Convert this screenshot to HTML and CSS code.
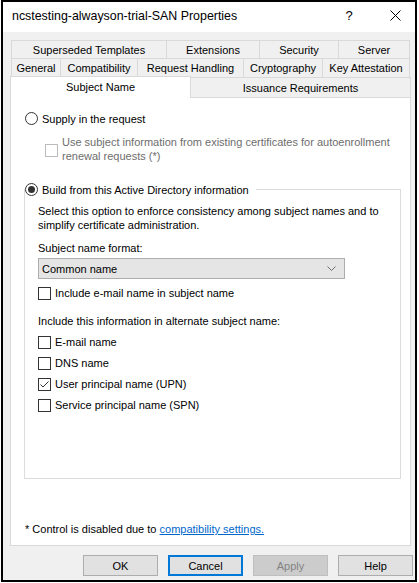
FILE: index.html
```html
<!DOCTYPE html>
<html>
<head>
<meta charset="utf-8">
<link rel="stylesheet" href="styles.css">
</head>
<body>
<div class="window">
  <div class="titlebar">
    <span class="title">ncstesting-alwayson-trial-SAN Properties</span>
    <span class="help">?</span>
    <span class="close"><svg width="11" height="11" viewBox="0 0 11 11"><path d="M0.5 0.5 L10.5 10.5 M10.5 0.5 L0.5 10.5" stroke="#000" stroke-width="1" fill="none"/></svg></span>
  </div>
  <div class="body">
    <div class="tabs">
      <div class="tabrow row1">
        <div class="tab w-sup">Superseded Templates</div>
        <div class="tab w-ext">Extensions</div>
        <div class="tab w-sec">Security</div>
        <div class="tab w-srv">Server</div>
      </div>
      <div class="tabrow row2">
        <div class="tab w-gen">General</div>
        <div class="tab w-com">Compatibility</div>
        <div class="tab w-req">Request Handling</div>
        <div class="tab w-cry">Cryptography</div>
        <div class="tab w-key">Key Attestation</div>
      </div>
      <div class="tabrow row3">
        <div class="tab selected w-sub">Subject Name</div>
        <div class="tab w-iss">Issuance Requirements</div>
      </div>
    </div>
    <div class="panel">
      <div class="radio-row">
        <span class="radio"></span>
        <span class="label">Supply in the request</span>
      </div>
      <div class="check-row disabled multi">
        <span class="checkbox"></span>
        <span class="label">Use subject information from existing certificates for autoenrollment<br>renewal requests (*)</span>
      </div>
      <fieldset class="group">
        <legend class="group-legend">
          <span class="radio-row legend-row">
            <span class="radio checked"></span>
            <span class="label">Build from this Active Directory information</span>
          </span>
        </legend>
        <div class="group-body">
          <p class="desc">Select this option to enforce consistency among subject names and to<br>simplify certificate administration.</p>
          <p class="field-label">Subject name format:</p>
          <div class="select">
            <span class="select-text">Common name</span>
            <svg class="chev" width="9" height="5" viewBox="0 0 9 5"><path d="M0.5 0.5 L4.5 4.5 L8.5 0.5" stroke="#707070" stroke-width="1" fill="none"/></svg>
          </div>
          <div class="check-row first">
            <span class="checkbox"></span>
            <span class="label">Include e-mail name in subject name</span>
          </div>
          <p class="field-label alt">Include this information in alternate subject name:</p>
          <div class="check-row alt-first">
            <span class="checkbox"></span>
            <span class="label">E-mail name</span>
          </div>
          <div class="check-row">
            <span class="checkbox"></span>
            <span class="label">DNS name</span>
          </div>
          <div class="check-row">
            <span class="checkbox"><svg width="11" height="11" viewBox="0 0 11 11"><path d="M1.5 5.5 L4 8 L9.5 2.5" stroke="#333" stroke-width="1" fill="none"/></svg></span>
            <span class="label">User principal name (UPN)</span>
          </div>
          <div class="check-row">
            <span class="checkbox"></span>
            <span class="label">Service principal name (SPN)</span>
          </div>
        </div>
      </fieldset>
      <p class="footnote">* Control is disabled due to <a class="link" href="#">compatibility settings.</a></p>
    </div>
    <div class="buttons">
      <span class="btn">OK</span>
      <span class="btn default">Cancel</span>
      <span class="btn disabled">Apply</span>
      <span class="btn">Help</span>
    </div>
  </div>
</div>
</body>
</html>
```

FILE: styles.css
```css
* { box-sizing: border-box; }
html, body { margin: 0; padding: 0; background: #fff; }
body {
  font-family: "Liberation Sans", Arial, sans-serif;
  font-size: 11px;
  color: #000;
}
p { margin: 0; }

.window {
  width: 416px;
  height: 582px;
  margin-left: 1px;
  border: 2px solid #000;
  background: #f0f0f0;
  display: flex;
  flex-direction: column;
}

.titlebar {
  height: 30px;
  background: #fff;
  display: flex;
  align-items: center;
  padding-bottom: 3px;
  flex: none;
}
.title {
  font-size: 12.4px;
  padding-left: 9px;
}
.help {
  margin-left: auto;
  width: 22px;
  text-align: center;
  font-size: 13px;
}
.close {
  width: 22px;
  margin-left: 24px;
  margin-right: 9px;
  display: flex;
  justify-content: center;
  align-items: center;
}

.body {
  flex: 1;
  padding-top: 8px;
  display: flex;
  flex-direction: column;
}

.tabs {
  margin-left: 7px;
  width: 401px;
  position: relative;
  z-index: 1;
}
.tabrow { display: flex; }
.row1 { height: 18px; padding-left: 1px; }
.row2 { height: 19px; padding-left: 1px; }
.row3 { height: 20px; align-items: flex-end; }

.tab {
  border: 1px solid #d9d9d9;
  border-bottom: none;
  margin-left: -1px;
  background: #f0f0f0;
  display: flex;
  align-items: center;
  justify-content: center;
  height: 100%;
  white-space: nowrap;
}
.tab:first-child { margin-left: 0; }
.row3 .tab { height: 20px; }
.tab.selected {
  background: #fff;
  height: 22px;
  margin-bottom: -1px;
  padding-bottom: 2px;
}

.w-sup { width: 156px; }
.w-ext { width: 94px; }
.w-sec { width: 80px; }
.w-srv { width: 72px; }
.w-gen { width: 50px; }
.w-com { width: 78px; }
.w-req { width: 107px; }
.w-cry { width: 80px; }
.w-key { width: 88px; }
.w-sub { width: 181px; }
.w-iss { width: 221px; }

.panel {
  margin-left: 7px;
  width: 401px;
  height: 449px;
  background: #fff;
  border: 1px solid #d9d9d9;
  padding: 13px 0 0 14px;
  flex: none;
}

.radio-row {
  display: flex;
  align-items: center;
  height: 15px;
}
.radio {
  width: 13px;
  height: 13px;
  border: 1px solid #333;
  border-radius: 50%;
  background: #fff;
  flex: none;
  display: flex;
  align-items: center;
  justify-content: center;
  margin-right: 4px;
}
.radio.checked::after {
  content: "";
  width: 7px;
  height: 7px;
  border-radius: 50%;
  background: #333;
}

.check-row {
  display: flex;
  align-items: center;
  height: 14px;
  margin-top: 7px;
}
.checkbox {
  width: 13px;
  height: 13px;
  border: 1px solid #333;
  background: #fff;
  flex: none;
  margin-right: 4px;
  display: flex;
  align-items: center;
  justify-content: center;
}
.label { line-height: 14px; white-space: nowrap; }

.check-row.multi {
  margin-left: 20px;
  margin-top: 9px;
  height: auto;
  align-items: flex-start;
}
.check-row.multi .checkbox { margin-top: 9px; }
.disabled .label { color: #6d6d6d; }
.disabled .checkbox { border-color: #bcbcbc; }

.group {
  margin: 19px 0 0 -1px;
  width: 377px;
  height: 297px;
  border: 1px solid #dcdcdc;
  padding: 0;
  min-width: 0;
}
.group-legend {
  padding: 0 7px 0 0;
  margin: 0;
}
.group-body { padding: 7px 0 0 13px; }
.desc { line-height: 14px; }
.field-label { line-height: 14px; margin-top: 9px; }
.field-label.alt { margin-top: 14px; }

.select {
  margin-top: 3px;
  width: 307px;
  height: 21px;
  background: #e5e5e5;
  border: 1px solid #adadad;
  display: flex;
  align-items: center;
  padding: 0 6px 0 3px;
}
.select-text { flex: 1; }
.chev { flex: none; margin-right: 2px; }

.footnote {
  margin-top: 43px;
  margin-left: 0;
  line-height: 14px;
}
.link { color: #0066cc; text-decoration: underline; }

.buttons {
  display: flex;
  justify-content: flex-end;
  gap: 10px;
  padding-right: 2px;
  margin-top: 9px;
}
.btn {
  width: 75px;
  height: 21px;
  background: #e1e1e1;
  border: 1px solid #adadad;
  display: flex;
  align-items: center;
  justify-content: center;
}
.btn.default {
  border-color: #0078d7;
  box-shadow: inset 0 0 0 1px #0078d7;
}
.btn.disabled {
  background: #cccccc;
  border-color: #bfbfbf;
  color: #838383;
}
```
